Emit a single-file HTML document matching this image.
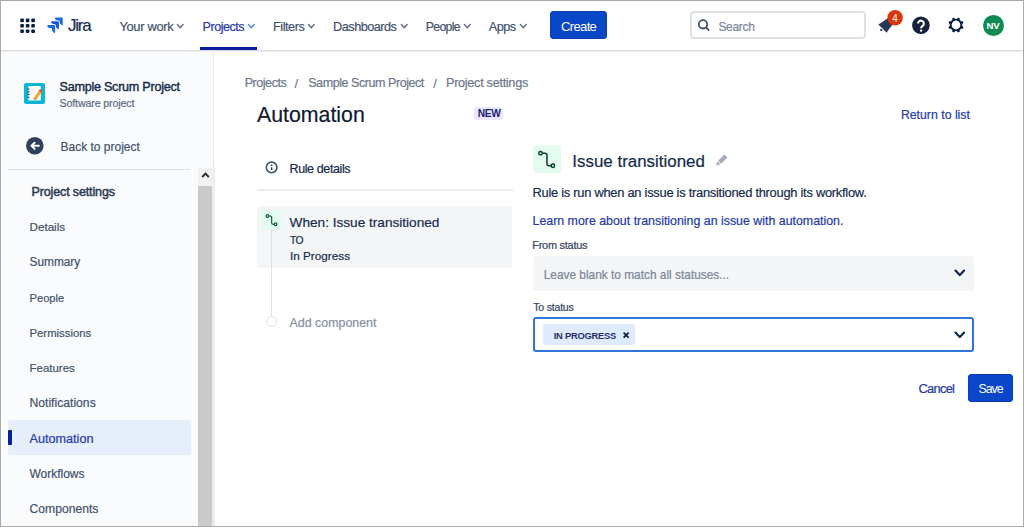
<!DOCTYPE html>
<html><head><meta charset="utf-8">
<style>
*{box-sizing:border-box;margin:0;padding:0}
html,body{width:1024px;height:527px;overflow:hidden;background:#fff}
body{font-family:"Liberation Sans",sans-serif;color:#172B4D;position:relative}
.a{position:absolute;white-space:nowrap}
#frame{position:absolute;left:0;top:0;width:1024px;height:527px;border:1px solid #A9A9A9;z-index:50}
</style></head><body>
<div class="a" style="left:1px;top:51px;width:212.5px;height:476px;background:#FAFBFC;"></div>
<div class="a" style="left:0px;top:50px;width:1024px;height:1px;background:#D9DCE1;"></div>
<div class="a" style="left:0px;top:51px;width:1024px;height:1px;background:#EEF0F2;"></div>
<div class="a" style="left:213.2px;top:51px;width:1px;height:476px;background:#E6E8EB;"></div>
<div class="a" style="left:212px;top:167px;width:2.6px;height:360px;background:#EDEDED;"></div>
<svg class="a" style="left:0;top:0" width="60" height="50" viewBox="0 0 60 50"><g fill="#091E42"><rect x="20.30" y="18.60" width="3.6" height="3.6" rx="0.9"/><rect x="20.30" y="24.00" width="3.6" height="3.6" rx="0.9"/><rect x="20.30" y="29.40" width="3.6" height="3.6" rx="0.9"/><rect x="25.80" y="18.60" width="3.6" height="3.6" rx="0.9"/><rect x="25.80" y="24.00" width="3.6" height="3.6" rx="0.9"/><rect x="25.80" y="29.40" width="3.6" height="3.6" rx="0.9"/><rect x="31.30" y="18.60" width="3.6" height="3.6" rx="0.9"/><rect x="31.30" y="24.00" width="3.6" height="3.6" rx="0.9"/><rect x="31.30" y="29.40" width="3.6" height="3.6" rx="0.9"/></g></svg>
<svg class="a" style="left:0;top:0" width="1024" height="527" viewBox="0 0 1024 527"><path fill="#1868DB" d="M55.90 17.40L61.70 17.40Q62.70 17.40 62.70 18.40L62.70 24.40Q62.70 25.80 61.60 25.10L59.90 23.40L59.50 20.70L56.80 20.30L55.10 19.30Q54.20 17.50 55.90 17.40z"/><path fill="#1558D6" d="M52.10 21.20L57.90 21.20Q58.90 21.20 58.90 22.20L58.90 28.20Q58.90 29.60 57.80 28.90L56.10 27.20L55.70 24.50L53.00 24.10L51.30 23.10Q50.40 21.30 52.10 21.20z"/><path fill="#1D6AE5" d="M48.30 25.00L54.10 25.00Q55.10 25.00 55.10 26.00L55.10 32.00Q55.10 33.40 54.00 32.70L52.30 31.00L51.90 28.30L49.20 27.90L47.50 26.90Q46.60 25.10 48.30 25.00z"/></svg>
<div class="a" style="left:68.0px;top:14px;font-size:16.94px;line-height:24px;color:#172B4D;-webkit-text-stroke:0.2px #172B4D;letter-spacing:-1.22px;">Jira</div>
<div class="a" style="left:119.4px;top:15px;font-size:12.87px;line-height:24px;color:#42526E;-webkit-text-stroke:0.2px #42526E;letter-spacing:-0.3px;">Your work</div>
<svg class="a" style="left:176.2px;top:22.6px" width="8.6" height="6.2" viewBox="-1 -1 8.6 6.2"><path d="M0.5 0.5L3.3 3.7L6.1 0.5" fill="none" stroke="#6B778C" stroke-width="1.6" stroke-linecap="round" stroke-linejoin="round"/></svg>
<div class="a" style="left:202.6px;top:15px;font-size:12.62px;line-height:24px;color:#2539A8;-webkit-text-stroke:0.2px #2539A8;letter-spacing:-0.518px;">Projects</div>
<svg class="a" style="left:246.6px;top:22.6px" width="8.6" height="6.2" viewBox="-1 -1 8.6 6.2"><path d="M0.5 0.5L3.3 3.7L6.1 0.5" fill="none" stroke="#5B8FE0" stroke-width="1.6" stroke-linecap="round" stroke-linejoin="round"/></svg>
<div class="a" style="left:200px;top:47px;width:57px;height:3px;background:#0B1E9E;"></div>
<div class="a" style="left:273.0px;top:15px;font-size:12.66px;line-height:24px;color:#42526E;-webkit-text-stroke:0.2px #42526E;letter-spacing:-0.448px;">Filters</div>
<svg class="a" style="left:307.4px;top:22.6px" width="8.6" height="6.2" viewBox="-1 -1 8.6 6.2"><path d="M0.5 0.5L3.3 3.7L6.1 0.5" fill="none" stroke="#6B778C" stroke-width="1.6" stroke-linecap="round" stroke-linejoin="round"/></svg>
<div class="a" style="left:333.1px;top:15px;font-size:12.7px;line-height:24px;color:#42526E;-webkit-text-stroke:0.2px #42526E;letter-spacing:-0.507px;">Dashboards</div>
<svg class="a" style="left:399.6px;top:22.6px" width="8.6" height="6.2" viewBox="-1 -1 8.6 6.2"><path d="M0.5 0.5L3.3 3.7L6.1 0.5" fill="none" stroke="#6B778C" stroke-width="1.6" stroke-linecap="round" stroke-linejoin="round"/></svg>
<div class="a" style="left:425.7px;top:15px;font-size:12.32px;line-height:24px;color:#42526E;-webkit-text-stroke:0.2px #42526E;letter-spacing:-0.685px;">People</div>
<svg class="a" style="left:462.9px;top:22.6px" width="8.6" height="6.2" viewBox="-1 -1 8.6 6.2"><path d="M0.5 0.5L3.3 3.7L6.1 0.5" fill="none" stroke="#6B778C" stroke-width="1.6" stroke-linecap="round" stroke-linejoin="round"/></svg>
<div class="a" style="left:488.8px;top:15px;font-size:12.69px;line-height:24px;color:#42526E;-webkit-text-stroke:0.2px #42526E;letter-spacing:-0.536px;">Apps</div>
<svg class="a" style="left:518.6px;top:22.6px" width="8.6" height="6.2" viewBox="-1 -1 8.6 6.2"><path d="M0.5 0.5L3.3 3.7L6.1 0.5" fill="none" stroke="#6B778C" stroke-width="1.6" stroke-linecap="round" stroke-linejoin="round"/></svg>
<div class="a" style="left:550px;top:11.4px;width:57px;height:28px;background:#0747C8;border-radius:3px;border:1px solid #0A3DAE;"></div>
<div class="a" style="left:561.0px;top:15px;font-size:13.14px;line-height:24px;color:#FFFFFF;letter-spacing:-0.704px;">Create</div>
<div class="a" style="left:690px;top:11px;width:176px;height:28px;background:#fff;border:2px solid #DFE1E6;border-radius:4px;box-sizing:border-box;"></div>
<svg class="a" style="left:0;top:0" width="1024" height="527" viewBox="0 0 1024 527"><circle cx="703" cy="24.3" r="4.2" fill="none" stroke="#42526E" stroke-width="1.8"/><path d="M706 27.4L708.6 30" stroke="#42526E" stroke-width="1.8" stroke-linecap="round"/></svg>
<div class="a" style="left:718.4px;top:15px;font-size:12.02px;line-height:24px;color:#7A869A;-webkit-text-stroke:0.2px #7A869A;letter-spacing:-0.302px;">Search</div>
<svg class="a" style="left:0;top:0" width="1024" height="527" viewBox="0 0 1024 527"><path d="M878.3 24.4Q882 22.5 887.6 18.2L892.5 24.8Q888.2 30 886.6 32.8Q883 28.5 878.3 24.4z" fill="#253858"/><circle cx="881.2" cy="29.9" r="1.1" fill="#253858"/></svg>
<svg class="a" style="left:0;top:0" width="1024" height="527" viewBox="0 0 1024 527"><circle cx="895.1" cy="17.7" r="7.7" fill="#D9360C"/></svg>
<div class="a" style="left:892.3px;top:7px;font-size:10px;line-height:24px;color:#fff;">4</div>
<svg class="a" style="left:0;top:0" width="1024" height="527" viewBox="0 0 1024 527"><circle cx="920.9" cy="25.2" r="8.8" fill="#13223F"/><path d="M918 23.6a2.9 2.9 0 1 1 4.6 2.3c-.9.6-1.5 1-1.5 2.3" fill="none" stroke="#fff" stroke-width="2.1"/><rect x="920.05" y="29.6" width="2.1" height="2" fill="#fff"/></svg>
<svg class="a" style="left:947.6px;top:17.2px" width="16" height="16" viewBox="-8 -8 16 16"><g fill="#091E42"><rect x="-1.3" y="-7.7" width="2.6" height="3" rx="1" transform="rotate(22.5)"/><rect x="-1.3" y="-7.7" width="2.6" height="3" rx="1" transform="rotate(67.5)"/><rect x="-1.3" y="-7.7" width="2.6" height="3" rx="1" transform="rotate(112.5)"/><rect x="-1.3" y="-7.7" width="2.6" height="3" rx="1" transform="rotate(157.5)"/><rect x="-1.3" y="-7.7" width="2.6" height="3" rx="1" transform="rotate(202.5)"/><rect x="-1.3" y="-7.7" width="2.6" height="3" rx="1" transform="rotate(247.5)"/><rect x="-1.3" y="-7.7" width="2.6" height="3" rx="1" transform="rotate(292.5)"/><rect x="-1.3" y="-7.7" width="2.6" height="3" rx="1" transform="rotate(337.5)"/></g><circle r="5.35" fill="none" stroke="#091E42" stroke-width="1.9"/></svg>
<div class="a" style="left:982.8px;top:15px;width:21px;height:21px;border-radius:50%;background:#0E8A52"></div>
<div class="a" style="left:986.5px;top:14px;font-size:9.6px;line-height:24px;color:#fff;font-weight:bold;letter-spacing:-0.1px;">NV</div>
<svg class="a" style="left:24px;top:83px" width="21" height="21" viewBox="0 0 21 21">
<rect width="21" height="21" rx="2" fill="#0DB6D8"/>
<rect x="4.3" y="3.1" width="12.5" height="14.5" rx="0.8" fill="#FFFFFF"/>
<g fill="#DFE1E6"><rect x="6.5" y="5.5" width="5" height="1"/><rect x="6.5" y="7.8" width="4" height="1"/><rect x="6.5" y="10.1" width="3" height="1"/></g>
<g fill="#253858"><rect x="3.2" y="5.5" width="2.4" height="1.1" rx="0.5"/><rect x="3.2" y="8.3" width="2.4" height="1.1" rx="0.5"/><rect x="3.2" y="10.9" width="2.4" height="1.1" rx="0.5"/><rect x="3.2" y="13.7" width="2.4" height="1.1" rx="0.5"/></g>
<path d="M10.6 16.4L16.9 7.6" stroke="#F5A623" stroke-width="3.2" stroke-linecap="butt"/>
<path d="M16.2 8.6L17.4 6.9" stroke="#E5493A" stroke-width="3.2"/>
<path d="M10.2 17.2l-0.3-2.2 1.9 1.3z" fill="#8993A4"/>
</svg>
<div class="a" style="left:59.5px;top:75px;font-size:12.59px;line-height:24px;color:#172B4D;letter-spacing:-0.241px;-webkit-text-stroke:0.4px #172B4D;">Sample Scrum Project</div>
<div class="a" style="left:59.5px;top:91px;font-size:10.68px;line-height:24px;color:#5E6C84;-webkit-text-stroke:0.2px #5E6C84;letter-spacing:-0.14px;">Software project</div>
<svg class="a" style="left:26.4px;top:137px" width="17.6" height="17.6" viewBox="0 0 18 18"><circle cx="9" cy="9" r="9" fill="#2F3F5C"/><path d="M13.2 9H5.8M8.8 5.8L5.6 9l3.2 3.2" fill="none" stroke="#fff" stroke-width="2" stroke-linecap="round" stroke-linejoin="round"/></svg>
<div class="a" style="left:60.5px;top:135px;font-size:12.01px;line-height:24px;color:#42526E;-webkit-text-stroke:0.2px #42526E;">Back to project</div>
<div class="a" style="left:8px;top:169px;width:182px;height:1px;background:#DCDFE4;"></div>
<div class="a" style="left:31.6px;top:180px;font-size:12.47px;line-height:24px;color:#2C3A55;letter-spacing:-0.12499999999999999px;-webkit-text-stroke:0.5px #2C3A55;">Project settings</div>
<div class="a" style="left:8px;top:419.5px;width:182.5px;height:35px;background:#E5EEFA;border-radius:3px;"></div>
<div class="a" style="left:8px;top:429.6px;width:3.6px;height:15px;background:#0B1E9E;border-radius:1px;"></div>
<div class="a" style="left:29.5px;top:215px;font-size:11.67px;line-height:24px;color:#42526E;-webkit-text-stroke:0.2px #42526E;">Details</div>
<div class="a" style="left:29.5px;top:250px;font-size:11.87px;line-height:24px;color:#42526E;-webkit-text-stroke:0.2px #42526E;">Summary</div>
<div class="a" style="left:29.5px;top:286px;font-size:11.16px;line-height:24px;color:#42526E;-webkit-text-stroke:0.2px #42526E;">People</div>
<div class="a" style="left:29.5px;top:321px;font-size:11.34px;line-height:24px;color:#42526E;-webkit-text-stroke:0.2px #42526E;">Permissions</div>
<div class="a" style="left:29.5px;top:356px;font-size:11.47px;line-height:24px;color:#42526E;-webkit-text-stroke:0.2px #42526E;">Features</div>
<div class="a" style="left:29.5px;top:391px;font-size:12.17px;line-height:24px;color:#42526E;-webkit-text-stroke:0.2px #42526E;">Notifications</div>
<div class="a" style="left:29.5px;top:427px;font-size:12.65px;line-height:24px;color:#2539A8;-webkit-text-stroke:0.2px #2539A8;">Automation</div>
<div class="a" style="left:29.5px;top:462px;font-size:11.98px;line-height:24px;color:#42526E;-webkit-text-stroke:0.2px #42526E;">Workflows</div>
<div class="a" style="left:29.5px;top:497px;font-size:12.17px;line-height:24px;color:#42526E;-webkit-text-stroke:0.2px #42526E;">Components</div>
<div class="a" style="left:197.5px;top:167.8px;width:15px;height:18px;background:#F1F1F1;"></div>
<svg class="a" style="left:200.5px;top:171px" width="9" height="8" viewBox="0 0 9 8"><path d="M1.2 6L4.5 2.6 7.8 6" fill="none" stroke="#2b2b2b" stroke-width="1.8"/></svg>
<div class="a" style="left:197.7px;top:186px;width:14.6px;height:341px;background:#CACACA;"></div>
<div class="a" style="left:244.7px;top:71px;font-size:12.67px;line-height:24px;color:#6B778C;-webkit-text-stroke:0.2px #6B778C;letter-spacing:-0.52px;">Projects</div>
<div class="a" style="left:294.6px;top:72px;font-size:13px;line-height:24px;color:#6B778C;-webkit-text-stroke:0.2px #6B778C;">/</div>
<div class="a" style="left:308.2px;top:71px;font-size:12.57px;line-height:24px;color:#6B778C;-webkit-text-stroke:0.2px #6B778C;letter-spacing:-0.463px;">Sample Scrum Project</div>
<div class="a" style="left:433.2px;top:72px;font-size:13px;line-height:24px;color:#6B778C;-webkit-text-stroke:0.2px #6B778C;">/</div>
<div class="a" style="left:446.0px;top:71px;font-size:12.71px;line-height:24px;color:#6B778C;-webkit-text-stroke:0.2px #6B778C;letter-spacing:-0.307px;">Project settings</div>
<div class="a" style="left:257.0px;top:103px;font-size:21.3px;line-height:24px;color:#0F1A30;-webkit-text-stroke:0.2px #0F1A30;">Automation</div>
<div class="a" style="left:473.8px;top:107.2px;width:29.2px;height:13.2px;background:#EAE6FF;border-radius:3px;"></div>
<div class="a" style="left:477.8px;top:102px;font-size:10.2px;line-height:24px;color:#231C6B;font-weight:bold;letter-spacing:-0.35px;">NEW</div>
<div class="a" style="left:900.9px;top:103px;font-size:12.31px;line-height:24px;color:#2539A8;-webkit-text-stroke:0.2px #2539A8;">Return to list</div>
<svg class="a" style="left:0;top:0" width="1024" height="527" viewBox="0 0 1024 527"><circle cx="271.6" cy="167.4" r="5.3" fill="none" stroke="#42526E" stroke-width="1.6"/><rect x="270.9" y="167.3" width="1.5" height="2.8" rx="0.5" fill="#253858"/><circle cx="271.65" cy="165.3" r="0.9" fill="#253858"/></svg>
<div class="a" style="left:289.5px;top:157px;font-size:12.56px;line-height:24px;color:#172B4D;-webkit-text-stroke:0.2px #172B4D;letter-spacing:-0.405px;">Rule details</div>
<div class="a" style="left:256.6px;top:189.2px;width:256px;height:2px;background:#EBECF0;"></div>
<div class="a" style="left:256.8px;top:205.5px;width:255.5px;height:62px;background:#F4F5F7;border-radius:3px;"></div>
<div class="a" style="left:270.6px;top:230px;width:1.6px;height:86.5px;background:#DFE1E6;"></div>
<div class="a" style="left:260.7px;top:209.8px;width:21.5px;height:20.5px;background:#E3FCEF;border-radius:3px;"></div>
<div class="a" style="left:289.6px;top:211px;font-size:13.61px;line-height:24px;color:#172B4D;-webkit-text-stroke:0.2px #172B4D;">When: Issue transitioned</div>
<div class="a" style="left:290.0px;top:229px;font-size:10.32px;line-height:24px;color:#172B4D;-webkit-text-stroke:0.2px #172B4D;letter-spacing:-0.524px;">TO</div>
<div class="a" style="left:290.0px;top:244px;font-size:11.74px;line-height:24px;color:#172B4D;-webkit-text-stroke:0.2px #172B4D;">In Progress</div>
<div class="a" style="left:266.4px;top:316.2px;width:10.6px;height:10.6px;border-radius:50%;border:1.5px solid #DFE1E6;background:#fff;box-sizing:border-box"></div>
<div class="a" style="left:289.6px;top:311px;font-size:12.4px;line-height:24px;color:#8590A2;-webkit-text-stroke:0.2px #8590A2;">Add component</div>
<div class="a" style="left:533.2px;top:145.4px;width:27.5px;height:28px;background:#E3FCEF;border-radius:3px;"></div>
<div class="a" style="left:572.3px;top:150px;font-size:16.93px;line-height:24px;color:#172B4D;-webkit-text-stroke:0.2px #172B4D;">Issue transitioned</div>
<svg class="a" style="left:0;top:0" width="1024" height="527" viewBox="0 0 1024 527"><path d="M727.4 157.6L724.3 154.5L718.1 160.7L721.2 163.8z" fill="#A5ADBA"/><path d="M720.5 164.3L717.4 161.2L716.2 165.5z" fill="#A5ADBA"/></svg>
<div class="a" style="left:532.5px;top:181px;font-size:12.88px;line-height:24px;color:#172B4D;-webkit-text-stroke:0.2px #172B4D;letter-spacing:-0.265px;">Rule is run when an issue is transitioned through its workflow.</div>
<div class="a" style="left:532.5px;top:209px;font-size:12.38px;line-height:24px;color:#2539A8;-webkit-text-stroke:0.2px #2539A8;">Learn more about transitioning an issue with automation.</div>
<div class="a" style="left:532.3px;top:233px;font-size:10.94px;line-height:24px;color:#344563;letter-spacing:-0.25px;-webkit-text-stroke:0.2px #344563;">From status</div>
<div class="a" style="left:533px;top:255.5px;width:440.6px;height:35px;background:#F4F5F7;border-radius:3px;"></div>
<div class="a" style="left:543.7px;top:263px;font-size:11.88px;line-height:24px;color:#7A869A;-webkit-text-stroke:0.2px #7A869A;">Leave blank to match all statuses...</div>
<svg class="a" style="left:953.9px;top:269.3px" width="11.6" height="7.6" viewBox="-1 -1 11.6 7.6"><path d="M0.5 0.5L4.8 5.1L9.1 0.5" fill="none" stroke="#091E42" stroke-width="2.1" stroke-linecap="round" stroke-linejoin="round"/></svg>
<div class="a" style="left:533.3px;top:295px;font-size:10.57px;line-height:24px;color:#344563;letter-spacing:-0.224px;-webkit-text-stroke:0.2px #344563;">To status</div>
<div class="a" style="left:533px;top:317.4px;width:441px;height:34.6px;background:#fff;border:2px solid #2F75DC;border-radius:3px;box-sizing:border-box;"></div>
<div class="a" style="left:543.2px;top:324.3px;width:91.8px;height:21px;background:#DEEBFF;border-radius:3px;"></div>
<div class="a" style="left:553.7px;top:324px;font-size:9.32px;line-height:24px;color:#1F2F66;font-weight:bold;letter-spacing:-0.226px;">IN PROGRESS</div>
<svg class="a" style="left:0;top:0" width="1024" height="527" viewBox="0 0 1024 527"><path d="M623.6 332.6L628.6 337.6M628.6 332.6L623.6 337.6" stroke="#091E42" stroke-width="1.7"/></svg>
<svg class="a" style="left:953.9px;top:331.2px" width="11.6" height="7.6" viewBox="-1 -1 11.6 7.6"><path d="M0.5 0.5L4.8 5.1L9.1 0.5" fill="none" stroke="#091E42" stroke-width="2.1" stroke-linecap="round" stroke-linejoin="round"/></svg>
<div class="a" style="left:918.4px;top:377px;font-size:12.92px;line-height:24px;color:#2539A8;-webkit-text-stroke:0.2px #2539A8;letter-spacing:-0.718px;">Cancel</div>
<div class="a" style="left:967.6px;top:373.6px;width:45.6px;height:28.2px;background:#0747C8;border-radius:3px;border:1px solid #0A3DAE;"></div>
<div class="a" style="left:978.4px;top:377px;font-size:12.37px;line-height:24px;color:#fff;letter-spacing:-0.972px;">Save</div><svg class="a" style="left:0;top:0" width="1024" height="527" viewBox="0 0 1024 527"><path d="M268.80 216.00H270.35Q271.66 216.00 271.66 217.31V222.89Q271.66 224.20 272.98 224.20H274.20" fill="none" stroke="#0B5C3A" stroke-width="1.15"/><circle cx="267.40" cy="216.00" r="1.4" fill="none" stroke="#0B5C3A" stroke-width="1.15"/><circle cx="275.60" cy="224.20" r="1.4" fill="none" stroke="#0B5C3A" stroke-width="1.15"/><path d="M542.20 153.30H544.96Q546.95 153.30 546.95 155.28V163.72Q546.95 165.70 548.93 165.70H551.20" fill="none" stroke="#0B3D2B" stroke-width="1.5"/><circle cx="540.50" cy="153.30" r="1.7" fill="none" stroke="#0B3D2B" stroke-width="1.5"/><circle cx="552.90" cy="165.70" r="1.7" fill="none" stroke="#0B3D2B" stroke-width="1.5"/></svg>
<div id="frame"></div>
</body></html>
